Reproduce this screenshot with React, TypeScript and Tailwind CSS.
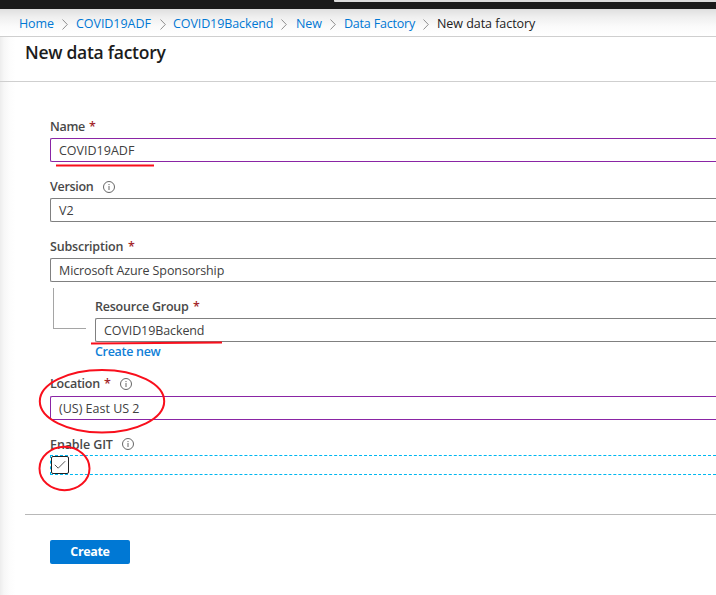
import type { ReactNode } from "react";

function Chevron() {
  return (
    <svg className="block shrink-0" width="6" height="11" viewBox="0 0 6 11" fill="none" stroke="#858585" strokeWidth="0.9">
      <path d="M0.5 0.5 5.3 5.5 0.5 10.5" />
    </svg>
  );
}

function Info() {
  return (
    <svg className="block" width="12" height="12" viewBox="0 0 12 12" fill="none" stroke="#555" strokeWidth="0.9">
      <circle cx="6" cy="6" r="5.5" />
      <path d="M6 5v4M6 3v1.1" />
    </svg>
  );
}

function Label({ text, className, required, info }: { text: string; className: string; required?: boolean; info?: string }) {
  return (
    <div className="flex h-[22px] items-center whitespace-nowrap text-[12.5px] font-semibold leading-[22px] text-[#484848]">
      <span className={className}>{text}</span>
      {required && <span className="ml-1 w-[6px] font-semibold text-[#a4262c]">*</span>}
      {info && <span className={info}><Info /></span>}
    </div>
  );
}

function Field({ children, active }: { children: ReactNode; active?: boolean }) {
  return (
    <div
      className={`flex h-6 items-center whitespace-nowrap rounded-l-[2px] border border-r-0 bg-white pl-2 pt-[2px] text-[12.5px] text-[#404040] ${
        active ? "border-[#8a25a5]" : "border-[#808080]"
      }`}
    >
      {children}
    </div>
  );
}

export default function App() {
  return (
    <div className="relative flex h-[595px] w-[716px] flex-col overflow-hidden bg-white font-['Open_Sans','Noto_Sans',sans-serif]">
      <header className="flex h-[9px] shrink-0 items-start bg-[#1b1b1b] pl-[334px]">
        <div className="h-[2px] w-full rounded-bl-[1px] bg-[#dcdcdc]" />
      </header>

      <div className="flex grow flex-col bg-[linear-gradient(to_right,#ededed_0px,#f7f7f7_4px,#fdfdfd_10px,#fff_16px)]">
        <nav className="flex h-7 shrink-0 items-center whitespace-nowrap border-b border-[#cfcfcf] bg-[linear-gradient(to_bottom,#dfdfdf_0px,#efefef_8px,#fafafa_17px,#fff_26px)] pl-[19px] pt-[3px] text-[12.5px] text-[#0078d4]">
          <a className="w-[43px] tracking-[-0.1px]">Home</a>
          <Chevron />
          <a className="ml-2 w-[84px] tracking-[-0.05px]">COVID19ADF</a>
          <Chevron />
          <a className="ml-[7px] w-[108px] tracking-[-0.1px]">COVID19Backend</a>
          <Chevron />
          <a className="ml-[9px] w-[34px] tracking-[-0.1px]">New</a>
          <Chevron />
          <a className="ml-2 w-[79px] tracking-[-0.2px]">Data Factory</a>
          <Chevron />
          <span className="ml-2 tracking-[-0.05px] text-[#222]">New data factory</span>
        </nav>

        <div className="h-[45px] shrink-0 border-b border-[#cfcfcf] pl-[25px] pt-[3px]">
          <h1 className="whitespace-nowrap text-[17.5px] font-semibold leading-6 tracking-[-0.28px] text-[#1c1c1c]">New data factory</h1>
        </div>

        <main className="flex flex-col pl-[50px] pt-[34px]">
          <Label text="Name" className="w-[35px] tracking-[-0.3px]" required />
          <Field active><span>COVID19ADF</span></Field>

          <div className="mt-[14px]">
            <Label text="Version" className="w-[43px] tracking-[-0.3px]" info="ml-[10px]" />
            <Field>V2</Field>
          </div>

          <div className="mt-[14px]">
            <Label text="Subscription" className="w-[74px] tracking-[-0.2px]" required />
            <Field><span className="tracking-[-0.1px]">Microsoft Azure Sponsorship</span></Field>
          </div>

          <div className="flex">
            <div className="ml-[3px] mt-[6px] h-[41px] w-[33px] shrink-0 border-b border-l border-[#a5a5a5]" />
            <div className="ml-[9px] grow pt-[14px]">
              <Label text="Resource Group" className="w-[94px] tracking-[-0.22px]" required />
              <Field><span className="tracking-[-0.1px]">COVID19Backend</span></Field>
              <a className="block h-[18px] text-[12.5px] font-semibold leading-[19px] tracking-[-0.3px] text-[#0f80d7]">Create new</a>
            </div>
          </div>

          <div className="mt-[13px]">
            <Label text="Location" className="w-[50px] tracking-[-0.25px]" required info="ml-[10px]" />
            <div className="mt-px">
              <Field active><span>(US) East US 2</span></Field>
            </div>
          </div>

          <div className="mt-[14px]">
            <Label text="Enable GIT" className="w-[63px] tracking-[-0.1px]" info="-mt-[2px] ml-[9px]" />
            <div className="-mt-px flex h-5 border border-r-0 border-dashed border-[#00b7f0]">
              <div role="checkbox" aria-checked="true" className="flex size-[18px] items-center justify-center rounded-[2px] border border-[#222] bg-white">
                <svg width="12" height="10" viewBox="0 0 12 10" fill="none" stroke="#555" strokeWidth="1">
                  <path d="M0.8 4.8 4.2 8.2 11.2 1.2" />
                </svg>
              </div>
            </div>
          </div>
        </main>

        <footer className="ml-[25px] mt-[39px] border-t border-[#b8b8b8] pl-[25px] pt-[25px]">
          <button className="block h-6 w-20 rounded-[2px] bg-[#0078d4] text-[12.5px] font-bold leading-[22px] tracking-[-0.35px] text-white">Create</button>
        </footer>
      </div>

      <svg className="pointer-events-none absolute left-0 top-0" width="716" height="595" viewBox="0 0 716 595" fill="none" stroke="#f90f1c" strokeWidth="2">
        <path d="M56 165.5H154" />
        <path d="M91 343.5 222 342.5" />
        <ellipse cx="102" cy="401.3" rx="62.2" ry="31.3" />
        <ellipse cx="64.5" cy="468.5" rx="25" ry="21.7" />
      </svg>
    </div>
  );
}
